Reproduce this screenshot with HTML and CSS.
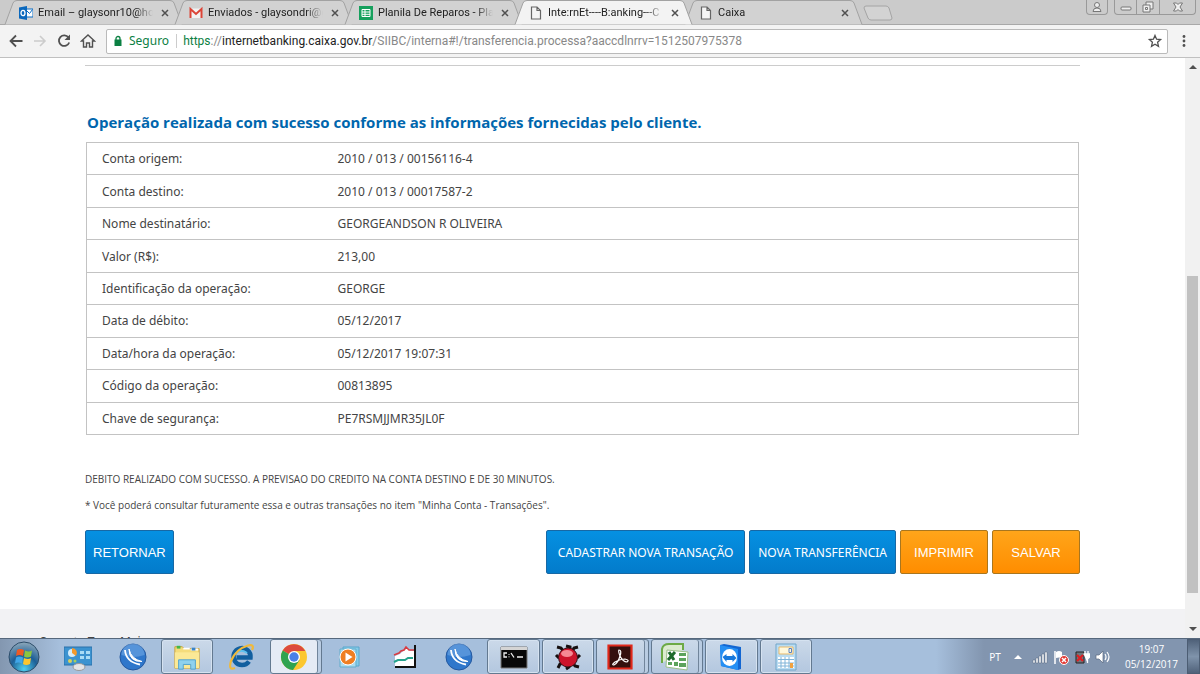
FILE: index.html
```html
<!DOCTYPE html>
<html lang="pt-BR">
<head>
    <meta charset="UTF-8">
    <meta name="viewport" content="width=device-width, initial-scale=1.0">
    <title>Internet Banking - Caixa</title>
    <link rel="stylesheet" href="styles.css">
</head>
<body>
    <!-- icons used more than once -->
    <svg class="symbols" aria-hidden="true">
        <symbol id="tab-shape" viewBox="0 0 179 25" preserveAspectRatio="none">
            <path d="M1 24.500 L9 3 Q10 .5 13 .5 H166 Q169 .5 170 3 L178 24.500" fill="currentColor" stroke="#a2a2a2"/>
        </symbol>
        <symbol id="page" viewBox="0 0 14 14">
            <path d="M2.500 1h5.500l3.500 3.500v8.500h-9z M8 1v3.500h3.500" fill="#f5f5f5" stroke="#666" stroke-width="1.200"/>
        </symbol>
        <symbol id="close" viewBox="0 0 8 8">
            <path d="M1 1l6 6M7 1l-6 6" stroke="#505050" stroke-width="1.500"/>
        </symbol>
        <symbol id="swirl" viewBox="0 0 28 28">
            <circle cx="14" cy="14" r="13" fill="#2f77cb" stroke="#2458a0"/>
            <path d="M2.500 12a11.500 11.500 0 0 1 23 0q-12 4-23 0z" fill="#7db2ea" opacity=".5"/>
            <path d="M6 7Q7 19 21 21.500" fill="none" stroke="#fff" stroke-width="1.800"/>
            <path d="M10 6Q12 16 23 18.500Q10 19 10 6z" fill="#fff" stroke="#fff"/>
        </symbol>
    </svg>

    <header class="tabs">
        <div class="tab">
            <svg class="tab-bg"><use href="#tab-shape"/></svg>
            <svg class="tab-icon" viewBox="0 0 14 14"><path d="M6 3h8v8H6z" fill="#fff" stroke="#0b6cc4"/><path d="M6.500 3.500l4 4l3-4" fill="none" stroke="#0b6cc4"/><path d="M0 1.500L8 0v14L0 12.500z" fill="#0a68bd"/><ellipse cx="4" cy="7" rx="2" ry="2.700" fill="none" stroke="#fff" stroke-width="1.300"/></svg>
            <span class="tab-title">Email – glaysonr10@hotm</span>
            <button class="tab-close" aria-label="Fechar"><svg><use href="#close"/></svg></button>
        </div>
        <div class="tab">
            <svg class="tab-bg"><use href="#tab-shape"/></svg>
            <svg class="tab-icon" viewBox="0 0 14 14"><path d="M1 2.500h12v9.500H1z" fill="#f2f2f2"/><path d="M1.500 12V3L7 8l5.500-5v9" fill="none" stroke="#dc4437" stroke-width="2"/></svg>
            <span class="tab-title">Enviados - glaysondri@g</span>
            <button class="tab-close" aria-label="Fechar"><svg><use href="#close"/></svg></button>
        </div>
        <div class="tab">
            <svg class="tab-bg"><use href="#tab-shape"/></svg>
            <svg class="tab-icon" viewBox="0 0 14 14"><path d="M0 0h14v14H0z" fill="#16a05d"/><path d="M3 3.500h8v7H3zM3 6h8M3 8.300h8M6 3.500v7" fill="none" stroke="#fff"/></svg>
            <span class="tab-title">Planila De Reparos - Plan</span>
            <button class="tab-close" aria-label="Fechar"><svg><use href="#close"/></svg></button>
        </div>
        <div class="tab active">
            <svg class="tab-bg"><use href="#tab-shape"/></svg>
            <svg class="tab-icon"><use href="#page"/></svg>
            <span class="tab-title">Inte:rnEt----B:anking---C</span>
            <button class="tab-close" aria-label="Fechar"><svg><use href="#close"/></svg></button>
        </div>
        <div class="tab">
            <svg class="tab-bg"><use href="#tab-shape"/></svg>
            <svg class="tab-icon"><use href="#page"/></svg>
            <span class="tab-title">Caixa</span>
            <button class="tab-close" aria-label="Fechar"><svg><use href="#close"/></svg></button>
        </div>
        <button class="new-tab" aria-label="Nova guia"><svg viewBox="0 0 32 16"><path d="M4 1h20q2 0 3 2l3 10q0 2-2 2H9q-2 0-3-2L2 3q0-2 2-2z" fill="#d3d3d3" stroke="#a4a4a4"/></svg></button>
        <div class="window-buttons">
            <button class="user" aria-label="Usuário"><svg viewBox="0 0 14 14"><circle cx="7" cy="5" r="2.500"/><path d="M3 11.500q0-3.500 4-3.500t4 3.500z"/></svg></button>
            <button class="win" aria-label="Minimizar"><svg viewBox="0 0 14 14"><rect x="2" y="7" width="10" height="3" rx="1"/></svg></button>
            <button class="win" aria-label="Restaurar"><svg viewBox="0 0 14 14"><path d="M5 2h7v7H5z"/><path d="M2 5h7v7H2z"/><path d="M4.500 7.500h2v2h-2z"/></svg></button>
            <button class="win win-close" aria-label="Fechar"><svg viewBox="0 0 14 14"><path d="M2.500 3h3L7 4.500 8.500 3h3L9 7l2.500 4h-3L7 9.500 5.500 11h-3L5 7z"/></svg></button>
        </div>
    </header>

    <nav class="toolbar">
        <button aria-label="Voltar"><svg viewBox="0 0 16 16"><path d="M14.500 8H2.500M8 2.500L2.500 8L8 13.500" fill="none" stroke="#505050" stroke-width="1.800"/></svg></button>
        <button aria-label="Avançar"><svg viewBox="0 0 16 16"><path d="M2 8h11M8 3l5 5l-5 5" fill="none" stroke="#ccc" stroke-width="1.600"/></svg></button>
        <button aria-label="Atualizar"><svg viewBox="0 0 16 16"><path d="M12.500 4.500A5.300 5.300 0 1 0 13.200 9.500" fill="none" stroke="#505050" stroke-width="1.800"/><path d="M14 1.500v5.500H8.500z" fill="#505050"/></svg></button>
        <button aria-label="Página inicial"><svg viewBox="0 0 16 16"><path d="M1.500 8L8 2l6.500 6H12.500v6H9.500V10h-3v4h-3V8z" fill="none" stroke="#505050" stroke-width="1.400"/></svg></button>
        <div class="address">
            <svg class="lock" viewBox="0 0 10 12"><path d="M1.500 4.500h7V11h-7z" fill="#0b8043"/><path d="M3 5V3.500a2 2 0 0 1 4 0V5" fill="none" stroke="#0b8043" stroke-width="1.300"/></svg>
            <span class="secure">Seguro</span>
            <a class="url" href="#"><span class="scheme">https</span>://<span class="host">internetbanking.caixa.gov.br</span>/SIIBC/interna#!/transferencia.processa?aaccdlnrrv=1512507975378</a>
            <button aria-label="Favoritos"><svg viewBox="0 0 16 16"><path d="M8 2.500l1.600 3.700 4 .4-3 2.700.9 4L8 11.200l-3.500 2.100.9-4-3-2.700 4-.4z" fill="none" stroke="#505050" stroke-width="1.300"/></svg></button>
        </div>
        <button class="menu" aria-label="Menu"><svg viewBox="0 0 16 16"><circle cx="8" cy="3.500" r="1.400"/><circle cx="8" cy="8" r="1.400"/><circle cx="8" cy="12.500" r="1.400"/></svg></button>
    </nav>

    <div class="viewport">
        <main class="page">
            <section class="content">
                <h1>Operação realizada com sucesso conforme as informações fornecidas pelo cliente.</h1>
                <table class="details">
                    <tr><th scope="row">Conta origem:</th><td>2010 / 013 / 00156116-4</td></tr>
                    <tr><th scope="row">Conta destino:</th><td>2010 / 013 / 00017587-2</td></tr>
                    <tr><th scope="row">Nome destinatário:</th><td>GEORGEANDSON R OLIVEIRA</td></tr>
                    <tr><th scope="row">Valor (R$):</th><td>213,00</td></tr>
                    <tr><th scope="row">Identificação da operação:</th><td>GEORGE</td></tr>
                    <tr><th scope="row">Data de débito:</th><td>05/12/2017</td></tr>
                    <tr><th scope="row">Data/hora da operação:</th><td>05/12/2017 19:07:31</td></tr>
                    <tr><th scope="row">Código da operação:</th><td>00813895</td></tr>
                    <tr><th scope="row">Chave de segurança:</th><td>PE7RSMJJMR35JL0F</td></tr>
                </table>
                <p class="note">DEBITO REALIZADO COM SUCESSO. A PREVISAO DO CREDITO NA CONTA DESTINO E DE 30 MINUTOS.</p>
                <p class="note">* Você poderá consultar futuramente essa e outras transações no item "Minha Conta - Transações".</p>
                <div class="actions">
                    <button class="btn btn-arial btn-back">RETORNAR</button>
                    <button class="btn btn-wide">CADASTRAR NOVA TRANSAÇÃO</button>
                    <button class="btn">NOVA TRANSFERÊNCIA</button>
                    <button class="btn btn-arial btn-orange">IMPRIMIR</button>
                    <button class="btn btn-arial btn-orange">SALVAR</button>
                </div>
            </section>
            <footer class="footer">Suporte Tecn. Mais</footer>
        </main>
        <div class="scrollbar">
            <svg viewBox="0 0 8 5"><path d="M0 5l4-4 4 4z"/></svg>
            <div class="thumb"></div>
            <svg viewBox="0 0 8 5"><path d="M0 0l4 4 4-4z"/></svg>
        </div>
    </div>

    <footer class="taskbar">
        <button class="start" aria-label="Iniciar"><svg viewBox="0 0 32 32">
            <defs><radialGradient id="orb" cx=".5" cy=".9" r=".9"><stop offset="0" stop-color="#4fd0f0"/><stop offset=".5" stop-color="#1d5f96"/><stop offset="1" stop-color="#8fa9bb"/></radialGradient></defs>
            <circle cx="16" cy="16" r="15" fill="url(#orb)" stroke="#2c4c69"/>
            <path d="M9 9q3-2 7 0l-1 6q-4-2-7 0z" fill="#ee5a24"/><path d="M17 9.500q4 2 7 0l-1 6q-4 2-7 0z" fill="#8cc63f"/>
            <path d="M8 16.500q3-2 7 0l-1 6q-4-2-7 0z" fill="#41a6e8"/><path d="M16 17q4 2 7 0l-1 6q-4 2-7 0z" fill="#fdc62e"/>
        </svg></button>
        <div class="tasks">
            <button class="task" aria-label="Painel de controle"><svg viewBox="0 0 28 28"><path d="M0 4h28v18H0z" fill="#3c93d0" stroke="#2a70aa"/><circle cx="8" cy="10" r="4" fill="#d4ecfa"/><path d="M8 10V5a5 5 0 0 1 4 8z" fill="#f59a2b"/><path d="M16 8h4v3h-4zM22 8h4v3h-4zM16 13h4v3h-4zM22 13h4v3h-4z" fill="#a9dcf6"/><circle cx="6" cy="18" r="2" fill="#d9d15c"/><circle cx="11" cy="18" r="1.500" fill="#a6d05c"/><ellipse cx="15" cy="24" rx="6" ry="3.500" fill="#e4e4e6" stroke="#999"/></svg></button>
            <button class="task" aria-label="Atendimento"><svg><use href="#swirl"/></svg></button>
            <button class="task open" aria-label="Explorador"><svg viewBox="0 0 30 28"><path d="M2 3h8l2 2h16v21H2z" fill="#f4dc7b" stroke="#c79f3a"/><path d="M4 2h4v3H4z" fill="#42b649"/><path d="M11 4h7v2h-7zM19 5h8v2h-8z" fill="#fff"/><path d="M20 4h4v3h-4z" fill="#3984c9"/><path d="M2 9h26v17H2z" fill="#fbe996"/><path d="M6 27V17h18v10h-5v-5h-8v5z" fill="#8ed1ee" stroke="#4fa0cc"/></svg></button>
            <button class="task" aria-label="Internet Explorer"><svg viewBox="0 0 28 28"><path d="M22 18.500A8.500 8.500 0 1 1 23.500 14.500H9.500" fill="none" stroke="#125f9f" stroke-width="4.500"/><path d="M8 11q6-6 12-1" fill="none" stroke="#5cc0ee" stroke-width="2"/><path d="M25 7q3-6-4-4.500Q9 6 4 18q-3 10 4 7" fill="none" stroke="#f0b93b" stroke-width="2.200"/></svg></button>
            <button class="task current stacked" aria-label="Chrome"><svg viewBox="0 0 28 28"><circle cx="14" cy="14" r="13" fill="#fcc72f"/><path d="M14 14L2.700 7.500A13 13 0 0 1 25.300 8H14z" fill="#dc4a3e"/><path d="M14 14L2.700 7.500A13 13 0 0 0 13 27l6.500-10z" fill="#2fa350"/><circle cx="14" cy="14" r="6" fill="#fff"/><circle cx="14" cy="14" r="4.700" fill="#4a80e8"/></svg></button>
            <button class="task" aria-label="Media Player"><svg viewBox="0 0 28 28"><path d="M7 4h16v19H7z" fill="#84cbe8" stroke="#5aa7cc"/><path d="M4 6h16v18H4z" fill="#aadcef" stroke="#62adcc"/><circle cx="12" cy="14" r="8" fill="#ef7f22" stroke="#fff"/><path d="M9.500 9.500v9l7-4.500z" fill="#fff"/></svg></button>
            <button class="task" aria-label="Monitor"><svg viewBox="0 0 28 28"><path d="M4 13l5-2 2-2 3-2 2-2 3 3h4v16H4z" fill="#fff"/><path d="M3 12l5-2 2-2 3-1 2-3 3 3h5" fill="none" stroke="#d93b41" stroke-width="1.600"/><path d="M3 19l4-2h7l3-2h5" fill="none" stroke="#25a38c" stroke-width="2"/><path d="M24 2v22H4" fill="none" stroke="#111" stroke-width="2"/></svg></button>
            <button class="task" aria-label="Suporte"><svg><use href="#swirl"/></svg></button>
            <button class="task open" aria-label="Prompt de comando"><svg viewBox="0 0 28 28"><path d="M1 4h26v21H1z" fill="#080808" stroke="#777"/><path d="M1 4h26v3H1z" fill="#d4d4d4"/><path d="M7 10H4v4h3M9 11v.8M9 13.500v.8M11 10l3 4.500M17 14h6" fill="none" stroke="#eee" stroke-width="1.300"/></svg></button>
            <button class="task open" aria-label="Depurador"><svg viewBox="0 0 28 28"><path d="M3 4l4 1 3 4M12 3l4 1v3M24 4l-4 1-2 4M2 12l3 3M26 12l-3 3M4 25l2-4 4-1M25 24l-4-1-2-3M12 26l3-2v-3" fill="none" stroke="#161010" stroke-width="3"/><circle cx="14" cy="14.500" r="9.500" fill="#cc142b" stroke="#3a1016"/><ellipse cx="13" cy="10.500" rx="6" ry="3.500" fill="#f58a94"/></svg></button>
            <button class="task open stacked" aria-label="Adobe Reader"><svg viewBox="0 0 28 28"><path d="M2.500 2.500h23v23h-23z" fill="#34100e" stroke="#e0291c" stroke-width="2.200"/><path d="M13 7q3 0 1 6-2 7-6 9-3 0 1-3 5-3 10-3 5 1 2 3-4 0-7-6-2-5-1-6z" fill="none" stroke="#fff" stroke-width="1.200"/></svg></button>
            <button class="task open stacked" aria-label="Excel"><svg viewBox="0 0 28 28"><path d="M1 20V6q1-5 7-5h14v6" fill="#dcebcf" stroke="#6daa45" stroke-width="2"/><path d="M6 7l21 2-1 18-21-3z" fill="#fff" stroke="#9bbf88"/><path d="M8 9l5 8M14 9l-7 8" stroke="#1f6b2c" stroke-width="3"/><path d="M18 10h7v3h-7zM18 15h7v3h-7zM18 20h7v4h-7zM7 19h4v3H7zM13 19h4v4h-4z" fill="#5ca35c"/></svg></button>
            <button class="task open" aria-label="TeamViewer"><svg viewBox="0 0 28 28"><path d="M3 2l4-1 17 3v22l-3 1L4 23z" fill="#1266d2"/><path d="M3 2l18 4v21L4 23z" fill="#248ff4"/><ellipse cx="12.500" cy="14.500" rx="7.500" ry="8.500" fill="#fff"/><path d="M5.500 14l4-3v2h6v-2l4 4-4 4v-2h-6v2z" fill="#1678dc"/></svg></button>
            <button class="task open" aria-label="Calculadora"><svg viewBox="0 0 28 28"><path d="M4 1h20v26H4z" fill="#b9dcf2" stroke="#70a5c9"/><path d="M7 4h14v7H7z" fill="#fff8dc" stroke="#e8b96c"/><path d="M17 5.500h2.500v4H17z" fill="none" stroke="#5981c4"/><path d="M6 14h16v11H6z" fill="#fff"/><path d="M6 16.500h16M6 20h16M6 23h16M9 14v11M13 14v11M17 14v11" stroke="#80b4d8"/><path d="M18 20h3v5h-3z" fill="#f1a240"/></svg></button>
        </div>
        <div class="tray">
            <span class="lang">PT</span>
            <svg class="tray-up" viewBox="0 0 8 5"><path d="M0 5l4-4 4 4z" fill="#fff"/></svg>
            <svg viewBox="0 0 16 16"><path d="M1 11h2v3H1zM4 9h2v5H4zM7 7h2v7H7zM10 5h2v9h-2zM13 3h2v11h-2z" fill="#fff" stroke="#56677e" stroke-width=".5"/></svg>
            <svg viewBox="0 0 16 16"><path d="M2 2v13" stroke="#fff" stroke-width="1.500"/><path d="M3 3q3-2 6 0v6q-3-1-6 0z" fill="#fff"/><circle cx="11" cy="11" r="4.500" fill="#e23a35" stroke="#fff"/><path d="M9 9l4 4M13 9l-4 4" stroke="#fff" stroke-width="1.500"/></svg>
            <svg viewBox="0 0 16 16"><path d="M2 3h8v11H2z" fill="#70767c" stroke="#222"/><path d="M11 2v4M14 2v4M9.500 5h6v3l-2 2v4" fill="#fff" stroke="#fff" stroke-width="1.300"/><path d="M3 6l6 6M9 6l-6 6" stroke="#e01d22" stroke-width="2.200"/></svg>
            <svg viewBox="0 0 16 16"><path d="M1 6h3l4-4v12l-4-4H1z" fill="#fff" stroke="#59697e" stroke-width=".7"/><path d="M10 5q2 3 0 6M12 3q4 5 0 10" fill="none" stroke="#fff" stroke-width="1.200"/></svg>
            <div class="clock"><span>19:07</span><span>05/12/2017</span></div>
        </div>
        <button class="show-desktop" aria-label="Mostrar área de trabalho"></button>
    </footer>
</body>
</html>
```

FILE: styles.css
```css
* {
    box-sizing: border-box;
}

body {
    margin: 0;
    height: 100vh;
    display: flex;
    flex-direction: column;
    overflow: hidden;
    font-family: "Noto Sans", "Open Sans", sans-serif;
    font-size: 12px;
    color: #444;
    background: #fff;
}

button {
    padding: 0;
    border: none;
    background: none;
    font-family: inherit;
    cursor: pointer;
}

svg {
    display: block;
}

.symbols {
    position: absolute;
    width: 0;
    height: 0;
}

/* tab strip */
.tabs {
    display: flex;
    flex: none;
    height: 25px;
    padding-left: 4px;
    background: #cbcbcb;
    box-shadow: inset 0 -1px #a8a8a8;
}

.tab {
    position: relative;
    display: flex;
    align-items: center;
    flex: 0 1 179px;
    min-width: 0;
    height: 25px;
    margin-right: -9px;
    padding: 0 14px 0 15px;
    color: #d2d2d2;
}

.tab.active {
    z-index: 1;
    color: #f3f3f3;
}

.tab-bg {
    position: absolute;
    inset: 0;
    width: 100%;
    height: 100%;
}

.tab-icon {
    position: relative;
    flex: none;
    width: 14px;
    height: 14px;
    margin-right: 5px;
}

.tab-title {
    position: relative;
    flex: 1;
    overflow: hidden;
    white-space: nowrap;
    font-family: Roboto, sans-serif;
    font-size: 11px;
    color: #222;
    mask-image: linear-gradient(to right, #000 85%, transparent);
}

.tab-close {
    position: relative;
    margin-left: 8px;
}

.tab-close svg {
    width: 8px;
    height: 8px;
}

.new-tab {
    margin: 0 0 0 8px;
}

.new-tab svg {
    width: 32px;
    height: 16px;
}

.window-buttons {
    display: flex;
    align-items: flex-start;
    margin-left: auto;
    padding-right: 4px;
}

.window-buttons button {
    display: flex;
    justify-content: center;
    width: 23px;
    height: 15px;
    border: 1px solid #999;
    border-top: none;
    border-left-width: 0;
}

.window-buttons svg {
    width: 14px;
    height: 14px;
    fill: #eee;
    stroke: #777;
}

.window-buttons .user {
    width: 22px;
    margin-right: 6px;
    border-left-width: 1px;
    border-radius: 0 0 4px 4px;
}

.window-buttons .user + .win {
    border-left-width: 1px;
    border-radius: 0 0 0 4px;
}

.window-buttons .win-close {
    width: 36px;
    border-radius: 0 0 4px 0;
}

/* toolbar */
.toolbar {
    display: flex;
    align-items: center;
    flex: none;
    gap: 8px;
    height: 33px;
    padding: 0 8px;
    background: #f3f3f3;
    border-bottom: 1px solid #c0c0c0;
}

.toolbar svg {
    width: 16px;
    height: 16px;
}

.address {
    display: flex;
    align-items: center;
    flex: 1;
    height: 25px;
    margin-left: 2px;
    padding: 0 4px 0 6px;
    background: #fff;
    border: 1px solid #bababa;
    border-radius: 2px;
}

.address .lock {
    width: 10px;
    height: 12px;
    margin-right: 6px;
}

.secure {
    padding-right: 7px;
    border-right: 1px solid #ccc;
    line-height: 14px;
    color: #0b8043;
}

.url {
    flex: 1;
    padding-left: 6px;
    white-space: nowrap;
    overflow: hidden;
    font-family: Roboto, sans-serif;
    text-decoration: none;
    color: #888;
}

.scheme {
    color: #0b8043;
}

.host {
    color: #222;
}

.menu {
    fill: #505050;
}

/* page */
.viewport {
    display: flex;
    flex: 1;
    min-height: 0;
}

.page {
    display: flex;
    flex-direction: column;
    flex: 1;
    overflow: hidden;
}

.content {
    flex: none;
    margin: 7px 105px 35px 85px;
    border-top: 1px solid #ccc;
}

h1 {
    margin: 45px 0 8px 2px;
    font-family: "Open Sans", sans-serif;
    font-size: 15px;
    line-height: 23px;
    font-weight: 700;
    color: #0066ad;
}

.details {
    width: calc(100% - 2px);
    height: 293px;
    margin-left: 1px;
    border-collapse: collapse;
}

.details tr {
    border: 1px solid #c3c3c3;
}

.details th,
.details td {
    padding: 0 0 0 15px;
    font-weight: 400;
    text-align: left;
}

.details th {
    width: 236px;
}

.note {
    margin: 0 0 10px;
    font-family: "Open Sans", sans-serif;
    font-size: 10px;
    line-height: 16px;
}

.details + .note {
    margin-top: 36px;
}

.actions {
    display: flex;
    gap: 4px;
    margin-top: 17px;
}

.btn {
    height: 44px;
    padding: 0 8px;
    border: 1px solid #1768a5;
    border-radius: 2px;
    background: linear-gradient(#0590e2, #037bcb);
    font-size: 12px;
    color: #fff;
}

.btn-wide {
    min-width: 199px;
}

.btn-arial {
    min-width: 88px;
    padding: 0 7px;
    font-family: "Liberation Sans", Arial, sans-serif;
    font-size: 13px;
}

.btn-back {
    margin-right: auto;
}

.btn-orange {
    border-color: #a8761f;
    background: linear-gradient(#ffa51a, #ff8d00);
}

.footer {
    flex: 1 0 60px;
    padding: 24px 40px;
    background: #f2f2f4;
}

.scrollbar {
    display: flex;
    flex-direction: column;
    align-items: center;
    flex: none;
    width: 15px;
    padding: 6px 0;
    background: #f1f1f1;
}

.scrollbar svg {
    width: 8px;
    height: 5px;
    fill: #505050;
}

.thumb {
    width: 11px;
    height: 317px;
    margin: auto 0 34px;
    background: #c1c1c1;
}

/* taskbar */
.taskbar {
    display: flex;
    flex: none;
    height: 36px;
    background: linear-gradient(to right, #8397b0, #a6bfdc 60px, #a6bfdc 78%, #8295af 82%);
    border-top: 1px solid #56687c;
}

.start {
    flex: none;
    width: 52px;
    padding-left: 8px;
}

.start svg {
    width: 32px;
    height: 32px;
}

.tasks {
    display: grid;
    grid-template-columns: repeat(14, 1fr);
    gap: 2px;
    flex: 0 1 760px;
}

.task {
    display: flex;
    align-items: center;
    justify-content: center;
    border: 1px solid transparent;
    border-radius: 3px;
}

.task svg {
    flex: none;
    width: 28px;
    height: 28px;
}

.open {
    border-color: #637990;
    background: linear-gradient(#cbd9e9, #b3c7df);
    box-shadow: inset 0 0 0 1px #d5e2f0;
}

.current {
    border-color: #637990;
    background: #e5ebf5;
}

.stacked {
    padding-right: 4px;
    box-shadow: inset -3px 0 #b9cce2, inset -4px 0 #71859b;
}

.tray {
    display: flex;
    align-items: center;
    gap: 5px;
    margin-left: auto;
    color: #fff;
}

.tray svg {
    width: 16px;
    height: 16px;
}

.lang {
    margin-right: 8px;
    font-size: 10px;
}

.tray .tray-up {
    width: 8px;
    height: 5px;
    margin-right: 5px;
}

.clock {
    display: flex;
    flex-direction: column;
    align-items: center;
    margin: 0 9px;
    font-family: "Open Sans", sans-serif;
    font-size: 10px;
    line-height: 15px;
}

.show-desktop {
    width: 13px;
    border: 1px solid #4c5d73;
    background: linear-gradient(#50627a, #7f93ab, #50627a);
}
```
